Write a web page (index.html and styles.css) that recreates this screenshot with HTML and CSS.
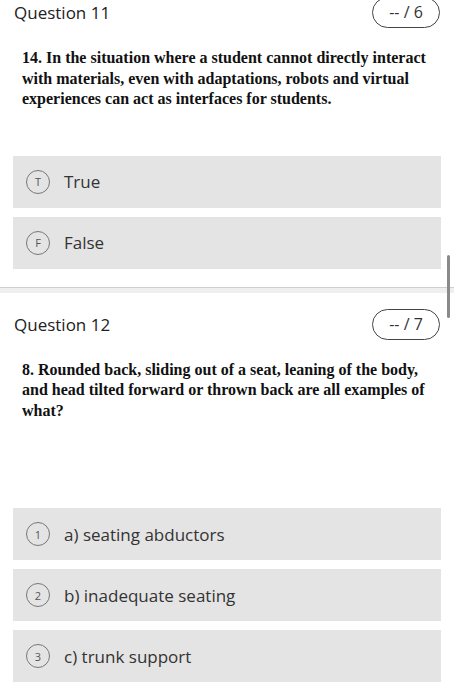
FILE: index.html
```html
<!DOCTYPE html>
<html lang="en">

<head>
    <meta charset="UTF-8">
    <meta name="viewport" content="width=device-width, initial-scale=1.0">
    <title>Quiz</title>
    <link rel="stylesheet" href="styles.css">
</head>

<body>
    <div class="question first">
        <div class="q-head">
            <span class="q-title">Question 11</span>
            <span class="q-points">-- / 6</span>
        </div>
        <p class="q-text">14. In the situation where a student cannot directly interact with materials, even with adaptations, robots and virtual experiences can act as interfaces for students.</p>
        <div class="options">
            <div class="option"><span class="opt-mark">T</span><span class="opt-label">True</span></div>
            <div class="option"><span class="opt-mark">F</span><span class="opt-label">False</span></div>
        </div>
    </div>

    <div class="divider"></div>

    <div class="question">
        <div class="q-head">
            <span class="q-title">Question 12</span>
            <span class="q-points">-- / 7</span>
        </div>
        <p class="q-text">8. Rounded back, sliding out of a seat, leaning of the body, and head tilted forward or thrown back are all examples of what?</p>
        <div class="q-blank"></div>
        <div class="options">
            <div class="option"><span class="opt-mark">1</span><span class="opt-label">a) seating abductors</span></div>
            <div class="option"><span class="opt-mark">2</span><span class="opt-label">b) inadequate seating</span></div>
            <div class="option"><span class="opt-mark">3</span><span class="opt-label">c) trunk support</span></div>
        </div>
    </div>

    <div class="scroll-thumb"></div>
</body>

</html>
```

FILE: styles.css
```css
body {
    margin: 0;
    font-family: 'Open Sans', sans-serif;
    color: #222;
    background: #fff;
    overflow: hidden;
}

.question {
    padding: 16px 13px 18px 13px;
}

.question.first {
    padding-top: 0;
    margin-top: -3px;
}

.q-head {
    display: flex;
    justify-content: space-between;
    align-items: center;
    padding: 0 1px 0 1px;
    height: 31px;
}

.q-title {
    font-size: 17px;
    color: #222;
}

.q-points {
    box-sizing: border-box;
    width: 68px;
    height: 31px;
    line-height: 28px;
    border: 1.5px solid #444;
    border-radius: 16px;
    text-align: center;
    font-size: 16px;
    color: #333;
}

.q-text {
    font-family: 'Liberation Serif', serif;
    font-weight: bold;
    font-size: 16px;
    line-height: 20.5px;
    color: #111;
    margin: 20px 9px 46px 9px;
}

.q-blank {
    height: 41px;
}

.options {
    display: flex;
    flex-direction: column;
    gap: 9px;
}

.option {
    display: flex;
    align-items: center;
    height: 52px;
    background-color: #e4e4e4;
    padding-left: 13px;
}

.opt-mark {
    box-sizing: border-box;
    width: 24px;
    height: 24px;
    border: 1px solid #777;
    border-radius: 50%;
    display: flex;
    align-items: center;
    justify-content: center;
    font-size: 11px;
    color: #555;
}

.opt-label {
    margin-left: 14px;
    font-size: 17px;
    color: #333;
}

.divider {
    border-top: 1px solid #cfcfcf;
    height: 5px;
    background-color: #efefef;
}

.scroll-thumb {
    position: absolute;
    left: 447px;
    top: 255px;
    width: 3px;
    height: 63px;
    border-radius: 2px;
    background-color: #8a8a8a;
}
```
